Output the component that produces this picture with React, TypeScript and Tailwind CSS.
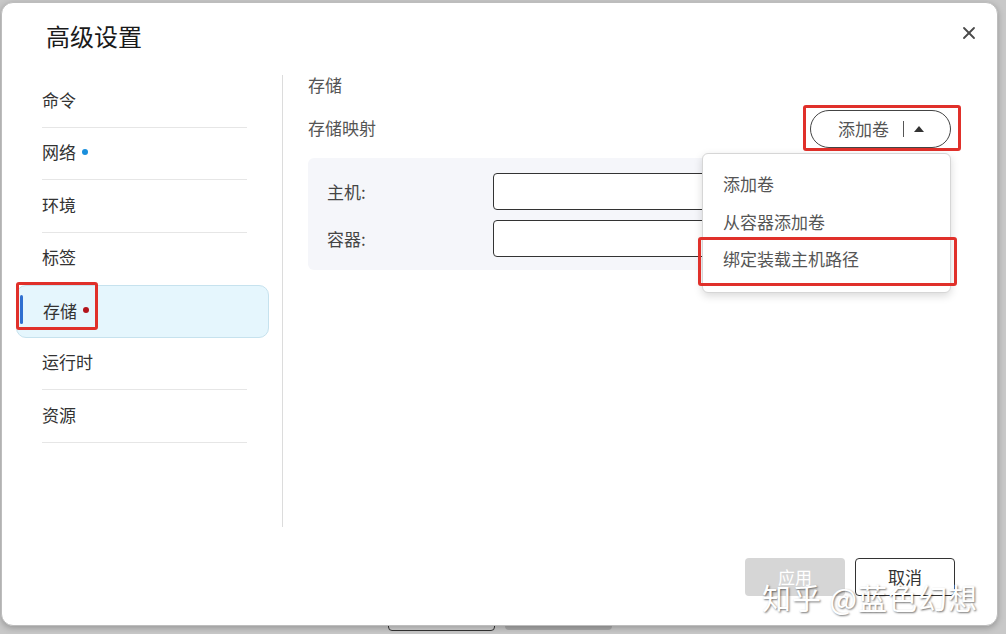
import { X } from 'lucide-react';

const navItems = [
  { label: '命令' },
  { label: '网络', dot: 'bg-[#1a8fdc]' },
  { label: '环境' },
  { label: '标签' },
  { label: '存储', dot: 'bg-[#b3141b]', active: true },
  { label: '运行时' },
  { label: '资源' },
];

const menuItems = ['添加卷', '从容器添加卷', '绑定装载主机路径'];

function NavList() {
  return (
    <div className="w-[253px] ml-[14px] flex flex-col">
      {navItems.map((item, i) => {
        const nextActive = navItems[i + 1]?.active;
        if (item.active) {
          return (
            <div
              key={item.label}
              className="relative h-[52.5px] flex items-center px-[26px] pb-[2px] bg-[#e5f6fd] border border-[#c6e2ee] rounded-[10px] text-[17px] text-[#333]"
            >
              <span className="absolute left-[3px] top-[9px] w-[3px] h-[29px] bg-[#2f6fd0] rounded-full" />
              {item.label}
              <span className={`ml-[6px] w-[6px] h-[6px] rounded-full ${item.dot}`} />
              {/* annotation */}
              <span className="absolute -left-[1px] -top-[4px] w-[82px] h-[48px] border-[3px] border-[#e0302a] rounded-[3px]" />
            </div>
          );
        }
        return (
          <div key={item.label} className="flex flex-col">
            <div className="h-[51.5px] flex items-center px-[26px] pb-[3px] text-[17px] text-[#333]">
              {item.label}
              {item.dot && <span className={`ml-[6px] w-[6px] h-[6px] rounded-full ${item.dot}`} />}
            </div>
            <div className={`ml-[26px] w-[205px] h-px ${nextActive ? 'bg-transparent' : 'bg-[#e6e6e6]'}`} />
          </div>
        );
      })}
    </div>
  );
}

function StoragePane() {
  return (
    <div className="flex-1 pl-[25px] pr-[46px] flex flex-col">
      <div className="h-[24px] -mt-[2px] flex items-center text-[17px] text-[#555]">存储</div>
      <div className="mt-[7px] h-[50px] flex items-center justify-between">
        <span className="text-[17px] text-[#555] -mt-[2px]">存储映射</span>
        <div className="relative">
          <button className="w-[141px] h-[38px] border border-[#444] rounded-full flex items-center pl-[27px] text-[17px] text-[#555]">
            添加卷
            <span className="ml-[14px] w-px h-[16px] bg-[#555]" />
            <svg className="ml-[9px]" width="12" height="8" viewBox="0 0 12 8">
              <path d="M6 1 L11 7 L1 7 Z" fill="#333" />
            </svg>
          </button>
          <span className="absolute -left-[7px] -top-[5px] w-[158px] h-[46px] border-[3px] border-[#e0302a] rounded-[3px]" />
          {/* dropdown */}
          <div className="absolute left-[-108px] top-[43px] w-[249px] h-[140px] bg-white border border-[#d6d6d6] rounded-[6px] shadow-[0_3px_8px_rgba(0,0,0,0.15)] z-10 pt-[11px]">
            {menuItems.map((m) => (
              <div key={m} className="h-[37.5px] flex items-center px-[20px] text-[17px] text-[#555]">
                {m}
              </div>
            ))}
            <span className="absolute -left-[5px] top-[83px] w-[259px] h-[49px] border-[3px] border-[#e0302a] rounded-[3px]" />
          </div>
        </div>
      </div>
      <div className="mt-[4px] h-[112px] bg-[#f5f6fa] rounded-[6px] pl-[19px] pr-[20px] pt-[15px] flex flex-col gap-[10px]">
        {['主机:', '容器:'].map((l) => (
          <div key={l} className="flex items-center h-[37px]">
            <span className="w-[166px] text-[17px] text-[#444]">{l}</span>
            <div className="flex-1 h-[37px] bg-white border border-[#333] rounded-[4px]" />
          </div>
        ))}
      </div>
    </div>
  );
}

export default function App() {
  return (
    <div
      className="relative w-[1006px] h-[634px] overflow-hidden bg-[#c8c8c8]"
      style={{ fontFamily: '"Noto Sans CJK SC", "Noto Sans", sans-serif' }}
    >
      {/* background page fragments under the dialog */}
      <div className="absolute left-[388px] top-[600px] w-[107px] h-[31px] rounded-[4px] border border-[#333] bg-[#d0d0d0]" />
      <div className="absolute left-[505px] top-[600px] w-[107px] h-[30px] rounded-[4px] bg-[#a9a9a9]" />

      <div className="absolute left-[1px] top-[2px] w-[997px] h-[624px] bg-white rounded-[12px] border border-[#bdbdbd] shadow-[0_2px_6px_rgba(0,0,0,0.25)] flex flex-col">
        <div className="h-[72px] flex items-start justify-between pl-[44px] pr-[18px] pt-[16px]">
          <h1 className="text-[24px] leading-[34px] text-[#1a1a1a]">高级设置</h1>
          <X className="w-[20px] h-[20px] mt-[4px] text-[#4a4a4a]" strokeWidth={2.2} />
        </div>
        <div className="flex flex-1">
          <NavList />
          <div className="ml-[13px] w-px h-[452px] bg-[#dcdcdc]" />
          <StoragePane />
        </div>
        <div className="h-[68px] flex items-start justify-end gap-[10px] pr-[42px] pt-[1px]">
          <button className="w-[100px] h-[38px] rounded-[4px] bg-[#d6d6d6] text-[17px] text-white">应用</button>
          <button className="w-[100px] h-[38px] rounded-[4px] border border-[#333] bg-white text-[17px] text-[#333]">取消</button>
        </div>
      </div>

      {/* watermark */}
      <div className="absolute left-[762px] top-[577px] text-[29px] leading-[40px] text-white tracking-[1px] [text-shadow:1px_1px_2px_rgba(0,0,0,0.55)] pointer-events-none">
        知乎 @蓝色幻想
      </div>
    </div>
  );
}
